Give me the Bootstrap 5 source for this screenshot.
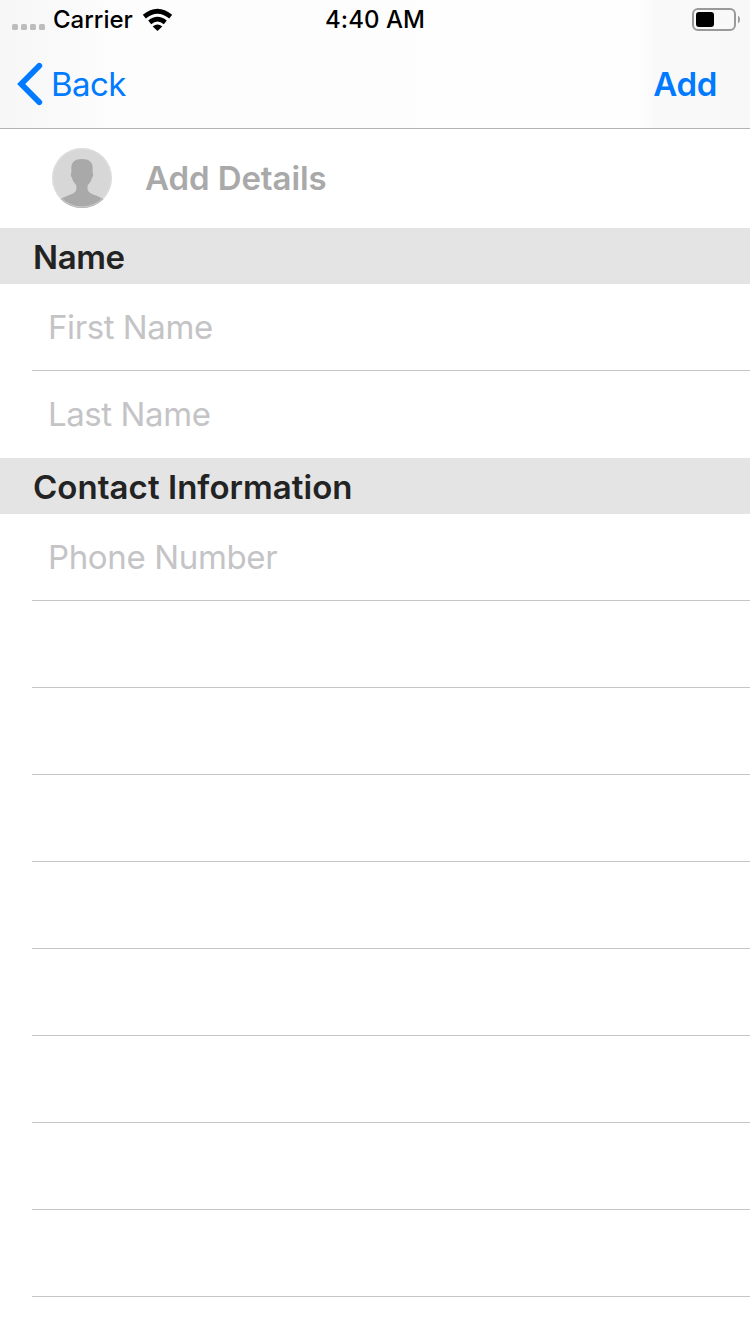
<!DOCTYPE html>
<html lang="en">
<head>
<meta charset="utf-8">
<meta name="viewport" content="width=device-width, initial-scale=1">
<title>Add Contact</title>
<link href="https://cdn.jsdelivr.net/npm/bootstrap@5.3.0/dist/css/bootstrap.min.css" rel="stylesheet">
<style>
  body { font-family: Inter, "Liberation Sans", sans-serif; font-size: 33px; line-height: 40px; height: 1334px; overflow: hidden; background: #fff; color: #232323; }
  .top-area { height: 129px; border-bottom: 1px solid #b2b2b2; background: linear-gradient(90deg, #f7f7f7 0, #fafafa 75px, #fdfdfd 115px, #fefefe 640px, #f9f9f9 655px, #f8f8f8 100%); }
  .status-bar { height: 40px; font-size: 24px; line-height: 40px; font-weight: 500; color: #000; }
  .status-bar > * { flex: 1 1 0; }
  .carrier { margin-left: 7px; margin-right: 9px; }
  .clock { letter-spacing: .05px; }
  .title-bar { height: 88px; color: #007aff; padding: 0 33px 0 17px; }
  .title-bar a { color: inherit; }
  .back-label { margin-left: 7px; letter-spacing: -.6px; }
  .add-label { letter-spacing: -.3px; }
  .details-row { height: 97px; margin-bottom: 2px; padding-left: 52px; color: #a9a9a9; }
  .details-label { margin-left: 33px; letter-spacing: -.08px; }
  .section-head { height: 56px; padding-left: 33px; font-size: 33px; line-height: 58px; background: #e4e4e4; color: #232323; }
  .name-head { letter-spacing: -.4px; }
  .contact-head { letter-spacing: .05px; }
  .entry { height: 87px; margin-left: 32px; border-bottom: 1px solid #c5c5c7; padding-left: 16px; }
  .entry.last-entry { height: 86px; border-bottom: 0; }
  .entry input { font-size: 33px; line-height: 40px; padding: 0; letter-spacing: -.42px; }
  .entry input.phone { letter-spacing: -.36px; }
  .entry input::placeholder { color: #c4c4c6; opacity: 1; }
  .group-one { height: 174px; }
</style>
</head>
<body>
<header class="top-area">
  <div class="status-bar d-flex align-items-center">
    <div class="d-flex align-items-center">
      <svg width="46" height="40" fill="#bdbdbd"><rect x="12" y="24" width="6" height="6" rx="1.6"/><rect x="21" y="24" width="6" height="6" rx="1.6"/><rect x="30" y="24" width="6" height="6" rx="1.6"/><rect x="39" y="24" width="6" height="6" rx="1.6"/></svg>
      <span class="carrier">Carrier</span>
      <svg width="32" height="40" viewBox="142 0 32 40"><path d="M157.500 31 L152.700 26.400 Q157.500 22.800 162.300 26.400Z"/><path d="M149.700 22.300 Q157.500 16 165.300 22.300M144.300 16.600 Q157.500 5.800 170.700 16.600" fill="none" stroke="#000" stroke-width="4.700"/></svg>
    </div>
    <div class="clock text-center">4:40 AM</div>
    <div class="d-flex justify-content-end">
      <svg width="60" height="40" viewBox="690 0 60 40"><rect x="693" y="9" width="42" height="21" rx="5" fill="none" stroke="#999" stroke-width="2"/><rect x="696" y="12" width="18" height="15" rx="3"/><path d="M738 15.500 Q740 17 740 19.500 T738 23.500Z" fill="#999"/></svg>
    </div>
  </div>
  <nav class="title-bar d-flex align-items-center justify-content-between">
    <a href="#" class="d-flex align-items-center text-decoration-none">
      <svg width="27" height="44" viewBox="17 62 27 44"><path d="M39.300 65.800 L21.200 84 L39.300 102.200" fill="none" stroke="#007aff" stroke-width="5.800" stroke-linecap="round" stroke-linejoin="miter"/></svg>
      <span class="back-label">Back</span>
    </a>
    <a href="#" class="add-label fw-semibold text-decoration-none">Add</a>
  </nav>
</header>
<main>
  <div class="details-row d-flex align-items-center">
    <svg width="60" height="60" viewBox="0 0 60 60"><defs><clipPath id="disc"><circle cx="30" cy="30" r="30"/></clipPath></defs><g clip-path="url(#disc)"><rect width="60" height="60" fill="#d7d7d7"/><path d="M30 11 C37 11 40.700 14 40.700 20 L40.500 24.500 C41.600 25 41.200 29 40 29.800 C39.500 32.500 38 34.800 35.800 37 C35.300 39.500 35.500 42 36.500 43.500 C39 46.800 45 47.300 51.500 51 L56 60 H4 L8.500 51 C15 47.300 21 46.800 23.500 43.500 C24.500 42 24.700 39.500 24.200 37 C22 34.800 20.500 32.500 20 29.800 C18.800 29 18.400 25 19.500 24.500 L19.300 20 C19.300 14 23 11 30 11Z" fill="#a9a9a9"/></g><circle cx="30" cy="30" r="29" fill="none" stroke="#e2e2e2" stroke-width=".8" stroke-opacity=".8"/></svg>
    <span class="details-label fw-semibold">Add Details</span>
  </div>
  <h2 class="section-head fw-semibold m-0"><span class="name-head">Name</span></h2>
  <div class="group-one">
    <div class="entry d-flex align-items-center"><input class="first form-control border-0 bg-transparent rounded-0" placeholder="First Name" aria-label="First Name"></div>
    <div class="entry last-entry d-flex align-items-center"><input class="second form-control border-0 bg-transparent rounded-0" placeholder="Last Name" aria-label="Last Name"></div>
  </div>
  <h2 class="section-head fw-semibold m-0"><span class="contact-head">Contact Information</span></h2>
  <div class="entry d-flex align-items-center"><input class="phone form-control border-0 bg-transparent rounded-0" type="tel" placeholder="Phone Number" aria-label="Phone Number"></div>
  <div class="entry"></div><div class="entry"></div><div class="entry"></div><div class="entry"></div>
  <div class="entry"></div><div class="entry"></div><div class="entry"></div><div class="entry"></div>
</main>
<script src="https://cdn.jsdelivr.net/npm/bootstrap@5.3.0/dist/js/bootstrap.bundle.min.js"></script>
</body>
</html>
